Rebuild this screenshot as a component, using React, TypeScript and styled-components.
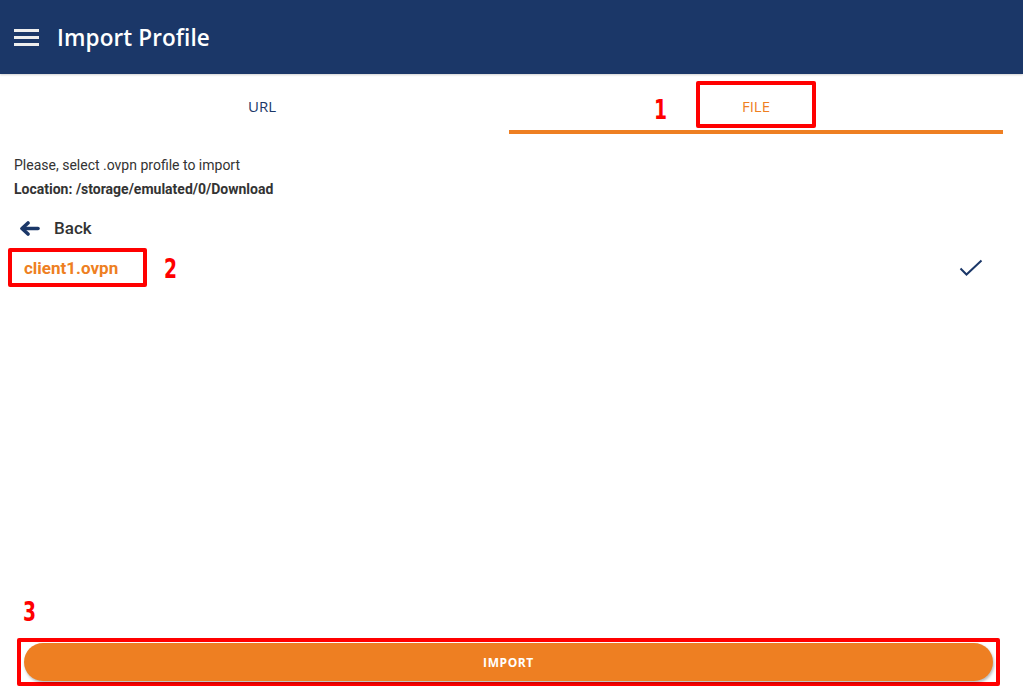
import React, { useState } from 'react';
import styled, { createGlobalStyle } from 'styled-components';

const GlobalStyle = createGlobalStyle`
  html, body {
    margin: 0;
    padding: 0;
    background: #ffffff;
    font-family: Roboto, "Liberation Sans", sans-serif;
  }
  * { box-sizing: border-box; }
`;

const NAVY = '#1b3768';
const ORANGE = '#ee7f22';
const MARK = '#ff0000';

const Screen = styled.div`
  display: flex;
  flex-direction: column;
  height: 695px;
  width: 1023px;
  background: #fff;
  overflow: hidden;
`;

const AppBar = styled.header`
  display: flex;
  align-items: center;
  height: 74px;
  padding: 0 0 0 14px;
  background: ${NAVY};
  box-shadow: 0 1px 2px rgba(0, 0, 0, 0.18);
  color: #fff;
  flex-shrink: 0;
`;

const MenuButton = styled.button`
  display: flex;
  flex-direction: column;
  gap: 4px;
  width: 25px;
  padding: 0;
  margin: 1px 0 0 0;
  border: none;
  background: none;
  cursor: pointer;

  span {
    display: block;
    height: 3px;
    background: #eeeeee;
  }
`;

const Title = styled.h1`
  margin: 0 0 0 18px;
  font-family: "Open Sans", Lato, sans-serif;
  font-size: 22.5px;
  font-weight: 600;
  letter-spacing: 0.1px;
`;

const TabBar = styled.nav`
  display: flex;
  margin: 0 20px 0 15px;
  flex-shrink: 0;
`;

const Tab = styled.div<{ $active?: boolean }>`
  flex: 1;
  display: flex;
  align-items: flex-end;
  justify-content: center;
  height: 60px;
  padding-bottom: 2px;
  border-bottom: 4px solid ${(p) => (p.$active ? ORANGE : 'transparent')};
  color: ${(p) => (p.$active ? ORANGE : NAVY)};
  font-family: "Open Sans", Lato, sans-serif;
  font-size: 15px;
  cursor: pointer;
`;

const TabLabel = styled.span<{ $marked?: boolean }>`
  position: relative;
  display: flex;
  align-items: center;
  justify-content: center;
  width: 120px;
  height: 47px;
  padding-top: 3px;
  border: 4px solid ${(p) => (p.$marked ? MARK : 'transparent')};
  border-radius: 2px;
`;

const StepNumber = styled.span`
  display: inline-block;
  font-family: "DejaVu Sans", "Liberation Sans", sans-serif;
  font-weight: 700;
  font-size: 26px;
  line-height: 1;
  color: ${MARK};
  transform: scaleX(0.72);
  transform-origin: left center;
`;

const TabStep = styled(StepNumber)`
  position: absolute;
  left: -46px;
  top: 12px;
`;

const Body = styled.main`
  flex: 1;
  display: flex;
  flex-direction: column;
  padding: 21px 0 0 14px;
`;

const Hint = styled.p<{ $strong?: boolean }>`
  margin: ${(p) => (p.$strong ? '4px' : '0')} 0 0 0;
  font-size: 14px;
  line-height: 20px;
  font-weight: ${(p) => (p.$strong ? 700 : 400)};
  color: #333333;
`;

const BackRow = styled.div`
  display: flex;
  align-items: center;
  gap: 14px;
  height: 30px;
  margin-top: 14px;
  padding-left: 5px;
  font-size: 17px;
  font-weight: 500;
  color: #333333;
  cursor: pointer;
`;

const FileRow = styled.div`
  display: flex;
  align-items: center;
  margin: 5px 40px 0 -6px;
`;

const FileMark = styled.div`
  display: flex;
  align-items: center;
  width: 139px;
  height: 39px;
  padding: 1px 0 0 12px;
  border: 4px solid ${MARK};
  border-radius: 2px;
`;

const FileName = styled.span`
  font-size: 17px;
  font-weight: 700;
  color: ${ORANGE};
`;

const FileStep = styled(StepNumber)`
  margin: 2px 0 0 17px;
  flex: 1;
`;

const Footer = styled.footer`
  display: flex;
  flex-direction: column;
  padding: 0 23px 9px 17px;
  flex-shrink: 0;
`;

const FooterStep = styled(StepNumber)`
  margin: 0 0 13px 6px;
`;

const ButtonMark = styled.div`
  padding: 1px 3px;
  border: 4px solid ${MARK};
  border-radius: 2px;
`;

const ImportButton = styled.button`
  display: block;
  width: 100%;
  height: 38px;
  border: none;
  border-radius: 19px;
  background: ${ORANGE};
  box-shadow: 1px 2px 3px rgba(0, 0, 0, 0.28);
  color: #ffffff;
  font-family: "Open Sans", Lato, sans-serif;
  font-size: 12px;
  font-weight: 700;
  letter-spacing: 0.6px;
  cursor: pointer;
`;

const MenuIcon = () => (
  <MenuButton aria-label="menu">
    <span />
    <span />
    <span />
  </MenuButton>
);

const BackArrow = () => (
  <svg width="21" height="15" viewBox="0 0 21 15" fill="none">
    <path d="M19 7.5H3.5" stroke={NAVY} strokeWidth="3.6" strokeLinecap="round" />
    <path d="M9 2L3 7.5L9 13" stroke={NAVY} strokeWidth="3.6" strokeLinecap="round" strokeLinejoin="round" />
  </svg>
);

const CheckMark = () => (
  <svg width="24" height="18" viewBox="0 0 24 18" fill="none">
    <path d="M1.5 9.5L7.5 15.5L22.5 1.5" stroke={NAVY} strokeWidth="2" />
  </svg>
);

const App: React.FC = () => {
  const [tab, setTab] = useState<'url' | 'file'>('file');

  return (
    <Screen>
      <GlobalStyle />
      <AppBar>
        <MenuIcon />
        <Title>Import Profile</Title>
      </AppBar>
      <TabBar>
        <Tab $active={tab === 'url'} onClick={() => setTab('url')}>
          <TabLabel>URL</TabLabel>
        </Tab>
        <Tab $active={tab === 'file'} onClick={() => setTab('file')}>
          <TabLabel $marked>
            <TabStep>1</TabStep>
            FILE
          </TabLabel>
        </Tab>
      </TabBar>
      <Body>
        <Hint>Please, select .ovpn profile to import</Hint>
        <Hint $strong>Location: /storage/emulated/0/Download</Hint>
        <BackRow>
          <BackArrow />
          Back
        </BackRow>
        <FileRow>
          <FileMark>
            <FileName>client1.ovpn</FileName>
          </FileMark>
          <FileStep>2</FileStep>
          <CheckMark />
        </FileRow>
      </Body>
      <Footer>
        <FooterStep>3</FooterStep>
        <ButtonMark>
          <ImportButton>IMPORT</ImportButton>
        </ButtonMark>
      </Footer>
    </Screen>
  );
};

export default App;
